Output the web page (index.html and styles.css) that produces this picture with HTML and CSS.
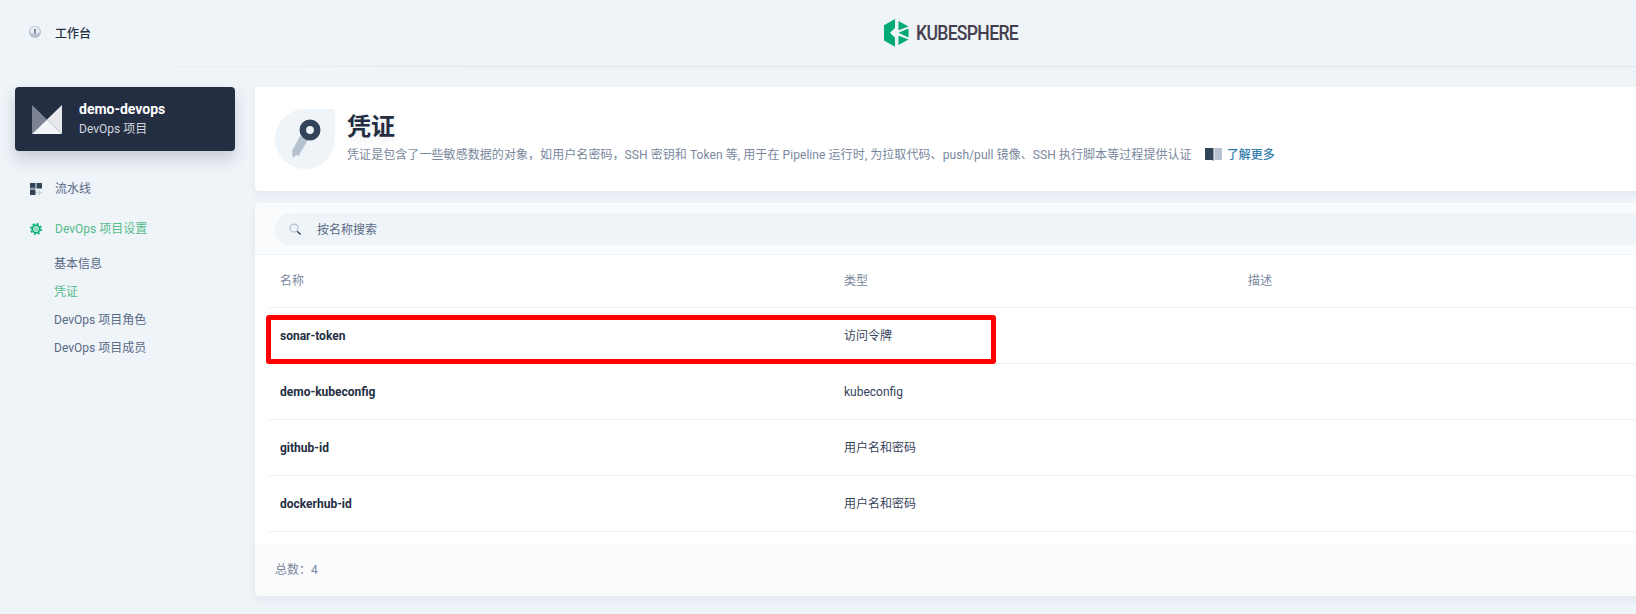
FILE: index.html
```html
<!DOCTYPE html>
<html lang="zh">
<head>
    <meta charset="utf-8"/>
    <title>凭证 - KubeSphere</title>
    <link rel="stylesheet" href="styles.css">
</head>
<body>
<header class="topbar">
    <a class="workbench">
        <svg class="nav-icon" viewBox="0 0 12 12"><circle cx="6" cy="6" r="6" fill="#b6c2cf"/><path d="M1.300 5.500a4.700 4.700 0 0 1 9.400 0c0 1.300-2 2.300-4.700 2.300S1.300 6.800 1.300 5.500z" fill="#e9eef4"/><path d="M5.400 3h1.200v4.500H5.400z" fill="#36435c"/></svg>
        <span>工作台</span>
    </a>
    <div class="brand">
        <svg class="brand-mark" viewBox="0 0 25 28"><path d="M0 6.300L11 0v9L6 13.800l5 5v9L0 21.500z" fill="#00aa72"/><path d="M14.500 2l10 5.600-10 3.600z" fill="#00aa72"/><path d="M14.500 13.800l10-4.300v9z" fill="#00aa72"/><path d="M14.500 26l10-5.600-10-3.600z" fill="#00aa72"/></svg>
        <span class="brand-name">KUBESPHERE</span>
    </div>
</header>

<div class="layout">
    <aside class="sidebar">
        <div class="project">
            <svg class="project-logo" viewBox="0 0 30 29"><path d="M0 0l15 14.500L0 29z" fill="#7c8494"/><path d="M30 0v29L15 14.500z" fill="#e6e8eb"/><path d="M0 29l15-14.500L30 29z" fill="#f3f4f6"/></svg>
            <div>
                <div class="project-name">demo-devops</div>
                <div class="project-type">DevOps 项目</div>
            </div>
        </div>
        <nav class="nav">
            <a class="nav-item">
                <svg class="nav-icon" viewBox="0 0 12 12"><path d="M0 0h5.500v5.500H0zM6.500 0H12v5.500H6.500zM0 6.500h5.500V12H0z" fill="#324558"/><path d="M0 4.600h5.500v1.400H0z" fill="#8a96a8"/><path d="M8.600 7h1.200v2h2v1.200h-2v1.800H8.600v-1.800h-2V9h2z" fill="#c3ccd6"/></svg>
                <span>流水线</span>
            </a>
            <a class="nav-item active">
                <svg class="nav-icon" viewBox="0 0 12 12"><circle cx="6" cy="6" r="2.500" fill="#8fdcc2"/><circle cx="6" cy="6" r="3.700" fill="none" stroke="#00aa72" stroke-width="1.600"/><circle cx="6" cy="6" r="5.200" fill="none" stroke="#00aa72" stroke-width="1.600" stroke-dasharray="2 2.080"/></svg>
                <span>DevOps 项目设置</span>
            </a>
            <ul class="subnav">
                <li>基本信息</li>
                <li class="active">凭证</li>
                <li>DevOps 项目角色</li>
                <li>DevOps 项目成员</li>
            </ul>
        </nav>
    </aside>

    <main class="main">
        <section class="banner">
            <div class="banner-icon">
                <svg viewBox="0 0 60 60"><path d="M25 27l8 4-6 10-2 3-1 3-3-1-3 3-1-7z" fill="#b6c2cf"/><circle cx="35" cy="21" r="7.200" fill="none" stroke="#324558" stroke-width="6.600"/></svg>
            </div>
            <div>
                <h1 class="banner-title">凭证</h1>
                <p class="banner-desc">
                    <span>凭证是包含了一些敏感数据的对象，如用户名密码，SSH 密钥和 Token 等, 用于在 Pipeline 运行时, 为拉取代码、push/pull 镜像、SSH 执行脚本等过程提供认证</span>
                    <a class="learn-more">
                        <svg class="book" viewBox="0 0 17 13"><path d="M0 0h8.500v13L7 12H0z" fill="#324558"/><path d="M9.500 0H17v12H9.500z" fill="#b6c2cf"/></svg>了解更多
                    </a>
                </p>
            </div>
        </section>

        <section class="table-card">
            <div class="toolbar">
                <div class="search">
                    <svg class="search-icon" viewBox="0 0 14 14"><circle cx="5.500" cy="5.500" r="4.300" fill="none" stroke="#b6c2cf" stroke-width="1.300"/><path d="M8.800 8.800l3.700 3.700" stroke="#36435c" stroke-width="1.500"/></svg>
                    <span class="search-text">按名称搜索</span>
                </div>
            </div>
            <div class="row head">
                <div>名称</div><div>类型</div><div>描述</div>
            </div>
            <div class="row">
                <div class="name">sonar-token</div><div>访问令牌</div><div></div>
            </div>
            <div class="row">
                <div class="name">demo-kubeconfig</div><div>kubeconfig</div><div></div>
            </div>
            <div class="row">
                <div class="name">github-id</div><div>用户名和密码</div><div></div>
            </div>
            <div class="row">
                <div class="name">dockerhub-id</div><div>用户名和密码</div><div></div>
            </div>
            <div class="table-foot">总数：4</div>
            <div class="highlight"></div>
        </section>
    </main>
</div>
</body>
</html>
```

FILE: styles.css
```css
html, body {
    margin: 0;
    padding: 0;
    height: 614px;
    overflow: hidden;
}
body {
    background: #eff4f9;
    color: #242e42;
    font: 12px/20px Roboto, "Noto Sans CJK SC", sans-serif;
}

.nav-icon {
    width: 12px;
    height: 12px;
    flex: none;
}

/* top bar */
.topbar {
    position: relative;
    display: flex;
    align-items: center;
    height: 66px;
    padding-left: 29px;
    border-bottom: 1px solid #dfe5ec;
    border-image: linear-gradient(to right, #edf1f6, #e9eef3 240px, #dfe5ec 500px) 1;
}
.workbench {
    display: flex;
    align-items: center;
    gap: 14px;
    padding-top: 2px;
    font-weight: 500;
}
.workbench .nav-icon {
    margin-top: -4px;
}
.brand {
    position: absolute;
    left: 884px;
    top: 19px;
    display: flex;
    align-items: center;
    gap: 7px;
}
.brand-mark {
    width: 25px;
    height: 28px;
}
.brand-name {
    color: #453f4d;
    font-size: 20px;
    font-weight: 500;
    line-height: 28px;
    letter-spacing: -0.8px;
    transform: scaleX(0.88);
    transform-origin: left center;
}

.layout {
    display: flex;
    padding-top: 20px;
}

/* left column */
.sidebar {
    flex: none;
    width: 220px;
    margin: 0 20px 0 15px;
}
.project {
    display: flex;
    align-items: center;
    gap: 17px;
    height: 64px;
    padding-left: 17px;
    box-sizing: border-box;
    background: #242e42;
    border-radius: 4px;
    box-shadow: 0 8px 16px 0 rgba(36, 46, 66, 0.2);
}
.project-logo {
    width: 30px;
    height: 29px;
}
.project-name {
    color: #fff;
    font-size: 14px;
    font-weight: 700;
}
.project-type {
    color: #d1d7df;
}
.nav {
    padding-top: 18px;
}
.nav-item {
    display: flex;
    align-items: center;
    gap: 13px;
    height: 40px;
    padding-left: 15px;
    color: #596a84;
}
.nav-item.active {
    color: #55bc8a;
}
.subnav {
    list-style: none;
    margin: 1px 0 0;
    padding: 0 0 0 39px;
    color: #596a84;
}
.subnav li {
    height: 28px;
    line-height: 28px;
}
.subnav li.active {
    color: #55bc8a;
}

/* right column */
.main {
    flex: none;
    width: 1500px;
}
.banner {
    display: flex;
    align-items: center;
    gap: 12px;
    height: 104px;
    padding-left: 20px;
    box-sizing: border-box;
    background: #fff;
    border-radius: 4px;
    box-shadow: 0 4px 8px 0 rgba(36, 46, 66, 0.06);
}
.banner-icon {
    width: 60px;
    height: 60px;
    background: #eff4f9;
    border-radius: 50% 0 50% 50%;
}
.banner-icon svg {
    display: block;
    width: 60px;
    height: 60px;
}
.banner-title {
    margin: 0 0 2px;
    font-size: 24px;
    line-height: 32px;
    font-weight: 700;
    text-shadow: 0 4px 8px rgba(36, 46, 66, 0.1);
}
.banner-desc {
    margin: 0 0 2px;
    color: #79879c;
    letter-spacing: 0.07px;
}
.learn-more {
    margin-left: 10px;
    color: #2f7eab;
    font-weight: 500;
    letter-spacing: 0;
}
.book {
    width: 17px;
    height: 13px;
    margin-right: 5px;
    vertical-align: -2px;
}

.table-card {
    position: relative;
    margin-top: 12px;
    background: #fff;
    border-radius: 4px;
    box-shadow: 0 4px 8px 0 rgba(36, 46, 66, 0.06);
}
.toolbar {
    padding: 10px 20px 9px;
    background: #f9fbfd;
    border-bottom: 1px solid #eff4f9;
    border-radius: 4px 4px 0 0;
}
.search {
    display: flex;
    align-items: center;
    gap: 15px;
    height: 32px;
    padding-left: 14px;
    background: #eff4f9;
    border-radius: 16px;
    color: #596a84;
}
.search-icon {
    width: 13px;
    height: 13px;
}
.search-text {
    padding-top: 2px;
}
.row {
    display: grid;
    grid-template-columns: 564px 404px 1fr;
    align-items: center;
    height: 55px;
    margin-left: 12px;
    padding-left: 13px;
    border-bottom: 1px solid #eff2f5;
    color: #36435c;
}
.row.head {
    height: 52px;
    color: #79879c;
}
.name {
    color: #242e42;
    font-weight: 700;
}
.table-foot {
    margin-top: 12px;
    height: 52px;
    line-height: 52px;
    padding-left: 20px;
    background: #f9fbfd;
    color: #79879c;
    border-radius: 0 0 4px 4px;
}

/* red marker drawn over the first row */
.highlight {
    position: absolute;
    left: 11px;
    top: 112px;
    width: 720px;
    height: 39px;
    border: 5px solid #ff0000;
    border-radius: 3px;
}
```
